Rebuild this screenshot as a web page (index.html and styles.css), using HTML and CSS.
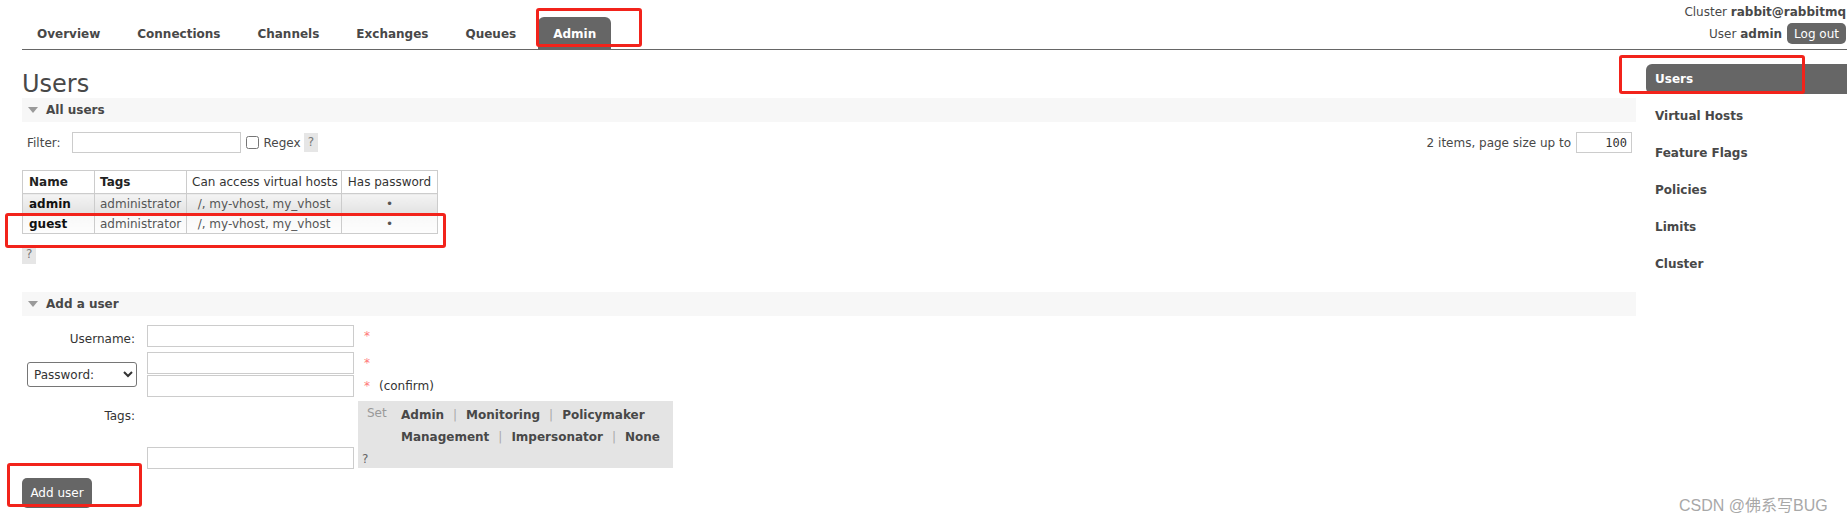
FILE: index.html
```html
<!DOCTYPE html>
<html lang="en">
<head>
<meta charset="utf-8">
<title>RabbitMQ Management - Users</title>
<link rel="stylesheet" href="styles.css">
</head>
<body>
<div class="page">
  <header class="header">
    <ul class="tabs">
      <li class="tab">Overview</li>
      <li class="tab">Connections</li>
      <li class="tab">Channels</li>
      <li class="tab">Exchanges</li>
      <li class="tab">Queues</li>
      <li class="tab tab-active">Admin</li>
    </ul>
    <div class="login">
      <div class="login-line">Cluster <b>rabbit@rabbitmq</b></div>
      <div class="login-line login-user"><span>User <b>admin</b></span><button class="logout" type="button">Log out</button></div>
    </div>
  </header>

  <div class="main">
    <div class="content">
      <h1 class="title">Users</h1>

      <section class="section">
        <div class="section-head"><span class="tri"></span>All users</div>
        <div class="filter-row">
          <div class="filter-left">
            <span class="filter-label">Filter:</span>
            <input class="text-input filter-input" type="text">
            <input class="check" type="checkbox">
            <span class="regex">Regex</span>
            <span class="help">?</span>
          </div>
          <div class="filter-right">
            <span>2 items, page size up to</span>
            <input class="page-size" type="text" value="100">
          </div>
        </div>

        <table class="list">
          <colgroup>
            <col class="col-name">
            <col class="col-tags">
            <col class="col-vhosts">
            <col class="col-pass">
          </colgroup>
          <thead>
            <tr>
              <th class="th-strong">Name</th>
              <th class="th-strong">Tags</th>
              <th class="th-center">Can access virtual hosts</th>
              <th class="th-center">Has password</th>
            </tr>
          </thead>
          <tbody>
            <tr class="alt1">
              <td class="cell-name">admin</td>
              <td class="cell-tags">administrator</td>
              <td class="cell-center">/, my-vhost, my_vhost</td>
              <td class="cell-center">&bull;</td>
            </tr>
            <tr class="alt2">
              <td class="cell-name">guest</td>
              <td class="cell-tags">administrator</td>
              <td class="cell-center">/, my-vhost, my_vhost</td>
              <td class="cell-center">&bull;</td>
            </tr>
          </tbody>
        </table>
        <div class="help-row"><span class="help">?</span></div>
      </section>

      <section class="section section-add">
        <div class="section-head"><span class="tri"></span>Add a user</div>
        <div class="user-form">
          <div class="form-row row-username">
            <div class="form-label">Username:</div>
            <div class="form-field">
              <input class="text-input field-input" type="text">
              <span class="mand">*</span>
            </div>
          </div>

          <div class="form-row row-password">
            <div class="form-label label-select">
              <select class="pass-select">
                <option>Password:</option>
              </select>
            </div>
            <div class="form-field field-stack">
              <div class="stack-line">
                <input class="text-input field-input" type="password">
                <span class="mand">*</span>
              </div>
              <div class="stack-line">
                <input class="text-input field-input" type="password">
                <span class="mand">*</span>
                <span class="confirm">(confirm)</span>
              </div>
            </div>
          </div>

          <div class="form-row row-tags">
            <div class="form-label label-tags">Tags:</div>
            <div class="form-field field-tags">
              <input class="text-input field-input tags-input" type="text">
              <div class="tagbox">
                <div class="tagbox-row">
                  <span class="set">Set</span>
                  <div class="links">
                    <div><span class="tag-link">Admin</span><span class="sep">|</span><span class="tag-link">Monitoring</span><span class="sep">|</span><span class="tag-link">Policymaker</span></div>
                    <div><span class="tag-link">Management</span><span class="sep">|</span><span class="tag-link">Impersonator</span><span class="sep">|</span><span class="tag-link">None</span></div>
                  </div>
                </div>
                <div class="tagbox-q">?</div>
              </div>
            </div>
          </div>

          <button class="add-btn" type="button">Add user</button>
        </div>
      </section>
    </div>

    <nav class="sidebar">
      <div class="side-item side-active">Users</div>
      <div class="side-item">Virtual Hosts</div>
      <div class="side-item">Feature Flags</div>
      <div class="side-item">Policies</div>
      <div class="side-item">Limits</div>
      <div class="side-item">Cluster</div>
    </nav>
  </div>

  <div class="annot annot-admin"></div>
  <div class="annot annot-users"></div>
  <div class="annot annot-guest"></div>
  <div class="annot annot-add"></div>
  <div class="watermark">CSDN @佛系写BUG</div>
</div>
</body>
</html>
```

FILE: styles.css
```css
* { box-sizing: border-box; }

html, body {
  margin: 0;
  padding: 0;
  background: #fff;
}

body {
  font-family: "DejaVu Sans", Verdana, sans-serif;
  font-size: 12px;
  line-height: 14px;
  color: #484848;
}

.page {
  position: relative;
  width: 1847px;
  height: 524px;
  overflow: hidden;
}

/* ---------- header ---------- */
.header {
  display: flex;
  justify-content: space-between;
  align-items: flex-end;
  margin-left: 22px;
  height: 50px;
  border-bottom: 1px solid #666;
}

.tabs {
  display: flex;
  gap: 7px;
  list-style: none;
  margin: 0;
  padding: 0;
}

.tab {
  padding: 10px 15px 8px;
  line-height: 14px;
  font-weight: bold;
  color: #484848;
  border-radius: 6px 6px 0 0;
}

.tab-active {
  background: #666;
  color: #fff;
}

.login {
  align-self: flex-start;
  text-align: right;
  padding: 5px 1px 0 0;
}

.login-line {
  line-height: 14px;
}

.login-user {
  display: flex;
  justify-content: flex-end;
  align-items: center;
  margin-top: 4px;
}

.logout {
  margin-left: 5px;
  height: 21px;
  padding: 0 7px;
  border: none;
  border-radius: 5px;
  background: #666;
  color: #fff;
  font-family: "DejaVu Sans", Verdana, sans-serif;
  font-size: 12px;
}

/* ---------- main layout ---------- */
.main {
  display: flex;
  align-items: flex-start;
}

.content {
  margin-left: 22px;
  width: 1614px;
}

.title {
  margin: 20px 0 0;
  font-size: 24px;
  line-height: 28px;
  font-weight: normal;
  color: #484848;
}

.section-head {
  height: 24px;
  line-height: 24px;
  background: #f7f7f7;
  padding-left: 6px;
  font-weight: bold;
  color: #484848;
  display: flex;
  align-items: center;
}

.tri {
  width: 0;
  height: 0;
  border-left: 5.5px solid transparent;
  border-right: 5.5px solid transparent;
  border-top: 6px solid #9a9a9a;
  margin-right: 8px;
}

/* ---------- filter ---------- */
.filter-row {
  display: flex;
  justify-content: space-between;
  align-items: center;
  margin-top: 10px;
  padding: 0 4px 0 5px;
}

.filter-left,
.filter-right {
  display: flex;
  align-items: center;
}

.text-input {
  border: 1px solid #ccc;
  height: 21px;
  padding: 1px 3px;
  font-family: "DejaVu Sans", Verdana, sans-serif;
  font-size: 12px;
  color: #333;
  background: #fff;
  border-radius: 0;
  outline: none;
}

.filter-input {
  width: 169px;
  margin-left: 11px;
}

.check {
  width: 13px;
  height: 13px;
  margin: 0 0 0 5px;
}

.regex {
  margin-left: 5px;
}

.help {
  display: inline-block;
  margin-left: 3px;
  padding: 0 4px;
  line-height: 19px;
  background: #e6e6e6;
  color: #777;
}

.filter-right span {
  margin-right: 5px;
}

.page-size {
  width: 56px;
  height: 21px;
  border: 1px solid #ccc;
  padding: 1px 4px;
  text-align: right;
  font-family: "DejaVu Sans Mono", monospace;
  font-size: 12px;
  color: #333;
  outline: none;
}

/* ---------- list table ---------- */
.list {
  border-collapse: collapse;
  table-layout: fixed;
  width: 415px;
  margin-top: 17px;
}

.col-name { width: 72px; }
.col-tags { width: 92px; }
.col-vhosts { width: 155px; }
.col-pass { width: 96px; }

.list th,
.list td {
  border: 1px solid #ccc;
  padding: 0 5px;
  white-space: nowrap;
  overflow: hidden;
}

.list th {
  height: 23px;
  line-height: 21px;
  background: #fff;
  font-weight: normal;
  color: #333;
}

.list th.th-strong {
  text-align: left;
  font-weight: bold;
  color: #222;
}

.list th:first-child,
.list td:first-child {
  padding-left: 6px;
}

.list th.th-center,
.list td.cell-center {
  text-align: center;
}

.list td {
  height: 20px;
  line-height: 18px;
  color: #555;
}

.list tr.alt1 td {
  background: linear-gradient(#f4f4f4, #e2e2e2);
}

.list tr.alt2 td {
  background: linear-gradient(#f8f8f8, #fdfdfd);
}

.list td.cell-name {
  font-weight: bold;
  color: #111;
}

.help-row {
  margin-top: 11px;
}

.help-row .help {
  margin-left: 0;
}

/* ---------- add user form ---------- */
.section-add {
  margin-top: 28px;
}

.user-form {
  padding-top: 9px;
}

.form-row {
  display: flex;
  align-items: flex-start;
}

.form-label {
  width: 115px;
  flex: 0 0 115px;
  text-align: right;
  padding-right: 2px;
  padding-top: 7px;
  color: #333;
}

.form-field {
  margin-left: 10px;
  display: flex;
  align-items: center;
}

.field-input {
  width: 207px;
  height: 22px;
}

.mand {
  margin-left: 10px;
  color: #f77;
}

.confirm {
  margin-left: 9px;
  color: #333;
}

.row-password {
  margin-top: 5px;
  align-items: center;
}

.label-select {
  padding: 0;
  display: flex;
  justify-content: flex-end;
}

.pass-select {
  width: 110px;
  height: 25px;
  font-family: "DejaVu Sans", Verdana, sans-serif;
  font-size: 12px;
  color: #333;
  border: 1px solid #767676;
  border-radius: 3px;
  background: #fff;
  padding: 0 2px;
}

.field-stack {
  flex-direction: column;
  align-items: flex-start;
}

.stack-line {
  display: flex;
  align-items: center;
}

.stack-line + .stack-line {
  margin-top: 1px;
}

.row-tags {
  margin-top: 4px;
}

.label-tags {
  padding-top: 8px;
}

.field-tags {
  align-items: flex-end;
}

.tags-input {
  margin-bottom: -1px;
}

.tagbox {
  width: 315px;
  height: 67px;
  margin-left: 4px;
  background: #e4e4e4;
  padding: 3px 4px 0 4px;
}

.tagbox-row {
  display: flex;
  align-items: flex-start;
}

.set {
  width: 39px;
  padding-left: 5px;
  margin-top: 2px;
  line-height: 14px;
  color: #999;
}

.links {
  line-height: 22px;
}

.tag-link {
  font-weight: bold;
  color: #484848;
}

.sep {
  margin: 0 9px;
  color: #aaa;
}

.tagbox-q {
  padding-top: 2px;
  line-height: 18px;
  color: #666;
}

.add-btn {
  display: block;
  margin-top: 10px;
  width: 70px;
  height: 30px;
  border: none;
  border-radius: 5px;
  background: #666;
  color: #fff;
  font-family: "DejaVu Sans", Verdana, sans-serif;
  font-size: 12px;
  padding: 0;
}

/* ---------- sidebar ---------- */
.sidebar {
  width: 201px;
  margin-left: 10px;
  margin-top: 14px;
}

.side-item {
  height: 30px;
  line-height: 30px;
  padding-left: 9px;
  margin-bottom: 7px;
  font-weight: bold;
  color: #484848;
}

.side-active {
  background: #666;
  color: #fff;
  border-radius: 6px 0 0 6px;
}

/* ---------- annotations (drawn over the screenshot) ---------- */
.annot {
  position: absolute;
  border: 3px solid #f2231b;
  border-radius: 3px;
}

.annot-admin { left: 536px; top: 8px; width: 106px; height: 39px; }
.annot-users { left: 1619px; top: 55px; width: 186px; height: 39px; }
.annot-guest { left: 5px; top: 213px; width: 441px; height: 35px; }
.annot-add { left: 7px; top: 463px; width: 135px; height: 44px; }

.watermark {
  position: absolute;
  left: 1679px;
  top: 497px;
  font-family: "Liberation Sans", "Noto Sans CJK SC", sans-serif;
  font-size: 16px;
  line-height: 18px;
  color: #a8a8a8;
  white-space: nowrap;
}
```
